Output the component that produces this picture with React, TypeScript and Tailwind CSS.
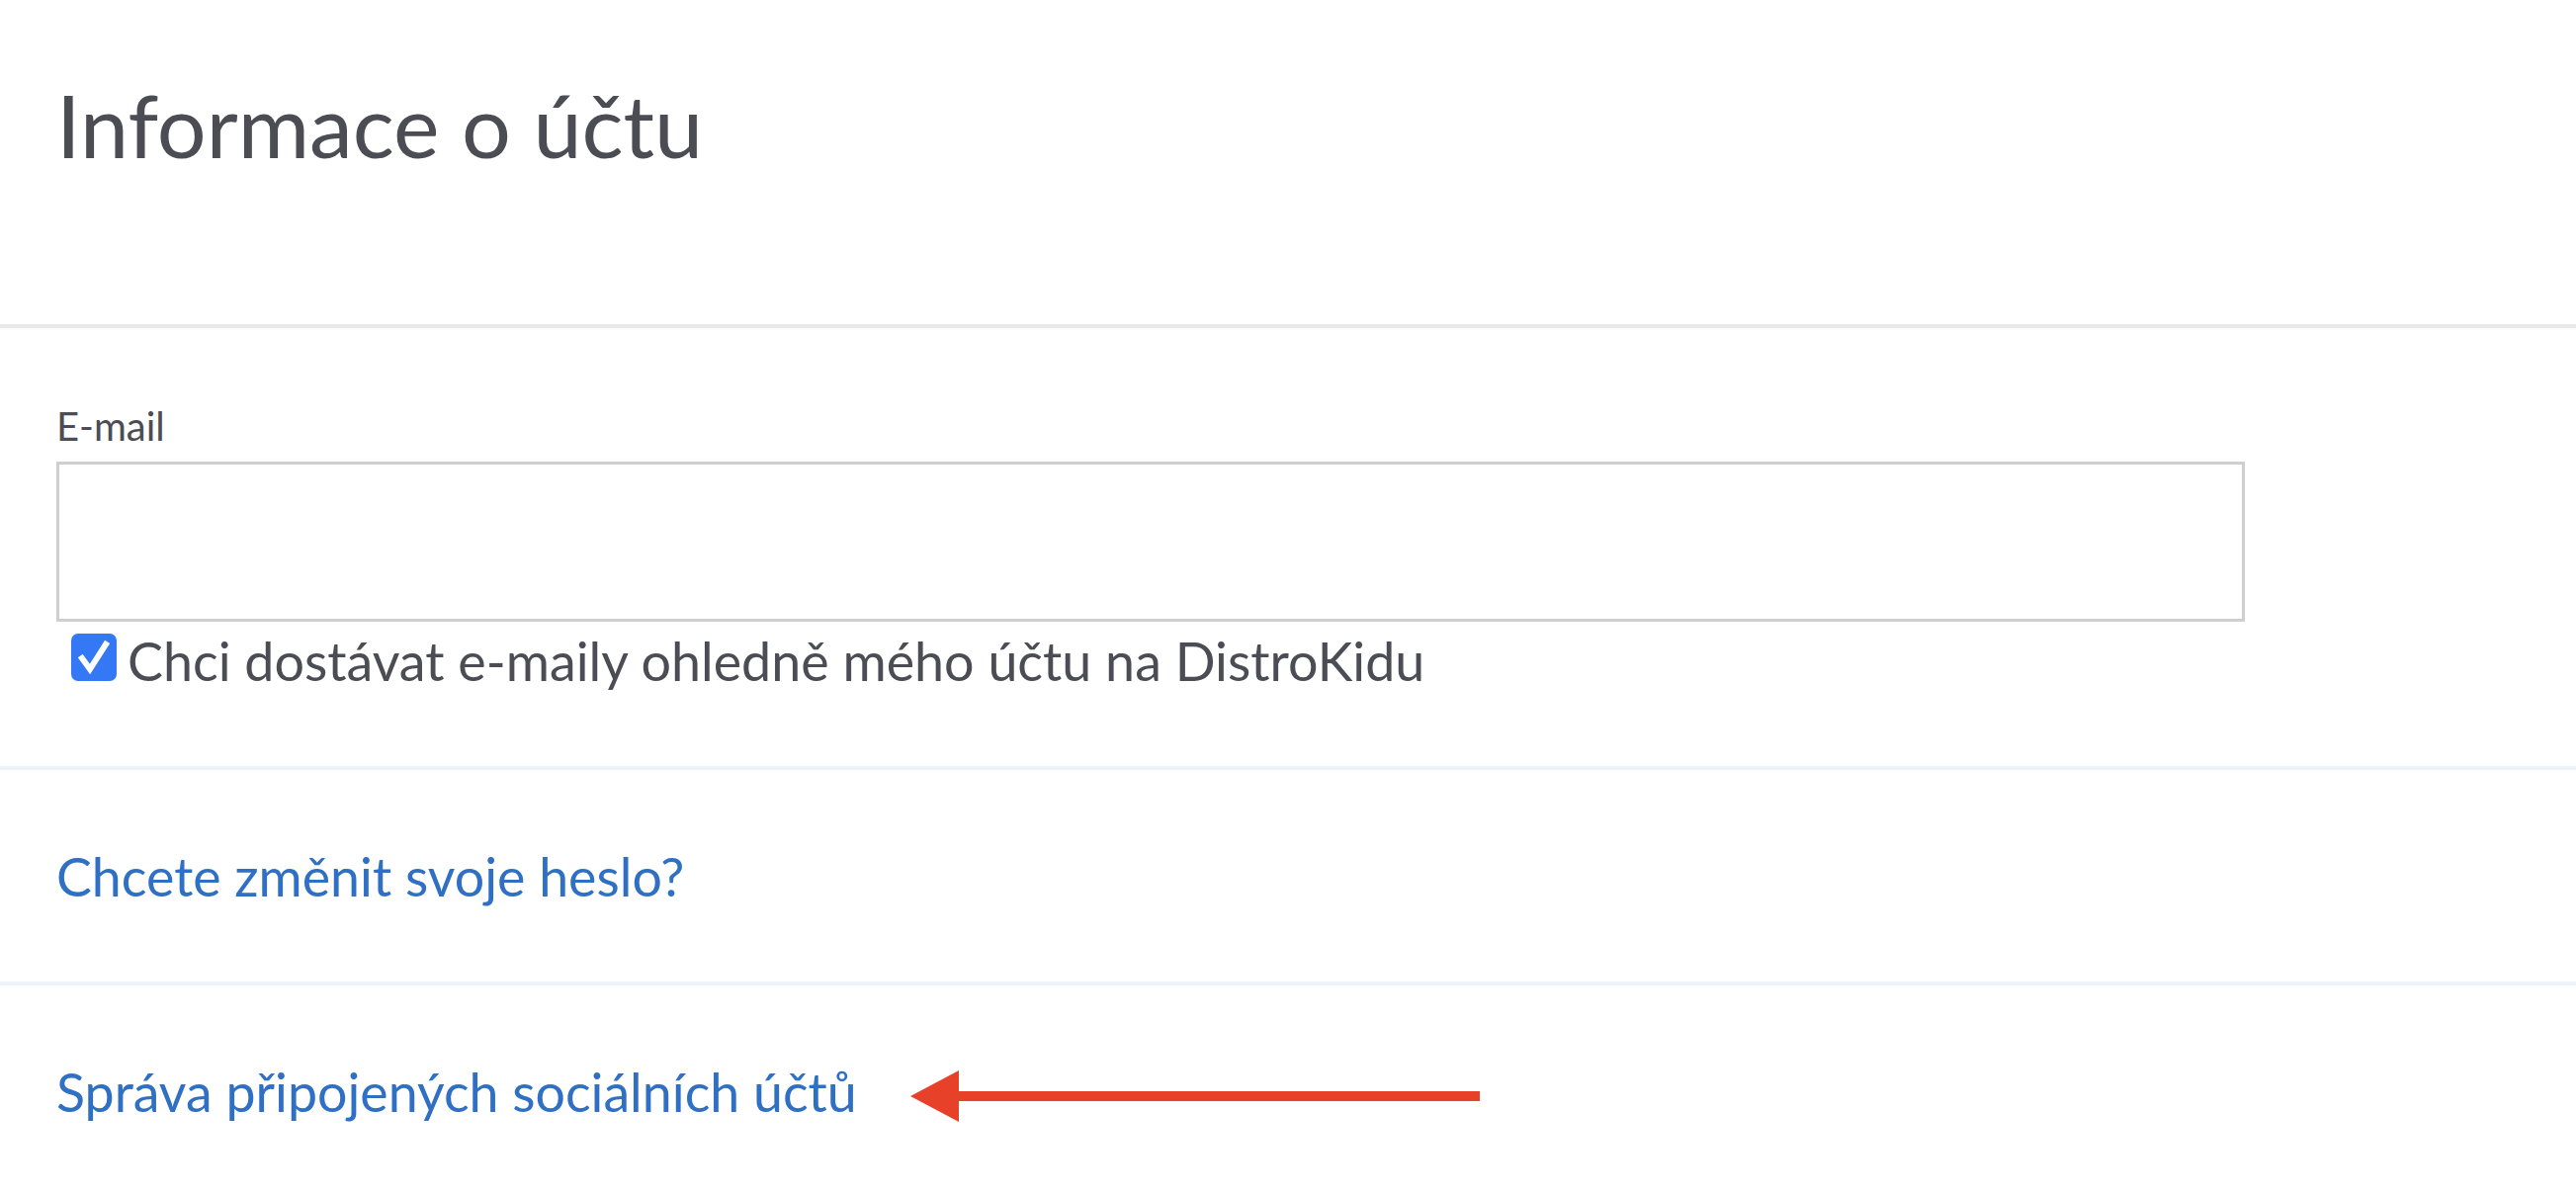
import React from "react";

function Check() {
  return (
    <div className="w-[46px] h-[48px] rounded-[7px] bg-[#3478f6] flex items-center justify-center shrink-0">
      <svg width="34" height="36" viewBox="0 0 34 36">
        <path d="M5 19 L13 30 L29 5" fill="none" stroke="#ffffff" strokeWidth="6" strokeLinecap="square" strokeLinejoin="miter" />
      </svg>
    </div>
  );
}

function Arrow() {
  return (
    <svg width="576" height="52" viewBox="0 0 576 52" className="shrink-0 mt-[9px]">
      <polygon points="0,26 49,0 49,52" fill="#e8412a" />
      <rect x="48" y="21" width="528" height="10" fill="#e8412a" />
    </svg>
  );
}

export default function App() {
  return (
    <div className="w-full min-h-screen bg-white font-['Lato','Noto_Sans',sans-serif] text-[#4b4c54]">
      <div className="h-[328px] px-[57px] pt-[74px]">
        <h1 className="text-[88px] leading-[1.2] font-normal text-[#4b4c54]">Informace o účtu</h1>
      </div>
      <div className="h-[4px] bg-[#e8e8e8]" />
      <div className="pt-[75px] pb-[80px] pl-[57px]">
        <label className="block text-[40px] leading-[48px]">E-mail</label>
        <div className="mt-[12px] w-[2214px] h-[162px] border-[3px] border-[#cfcfcf] bg-white" />
        <div className="mt-[12px] flex items-start pl-[15px] gap-[11px]">
          <Check />
          <span className="text-[53.8px] leading-[54px]">Chci dostávat e-maily ohledně mého účtu na DistroKidu</span>
        </div>
      </div>
      <div className="h-[4px] bg-[#edf3fa]" />
      <div className="h-[214px] flex items-center pl-[57px]">
        <a className="text-[53.7px] leading-[1.2] text-[#2f70c4] cursor-pointer">Chcete změnit svoje heslo?</a>
      </div>
      <div className="h-[4px] bg-[#edf3fa]" />
      <div className="h-[214px] flex items-center pl-[57px] gap-[54px]">
        <a className="text-[53.7px] leading-[1.2] text-[#2f70c4] cursor-pointer">Správa připojených sociálních účtů</a>
        <Arrow />
      </div>
    </div>
  );
}
